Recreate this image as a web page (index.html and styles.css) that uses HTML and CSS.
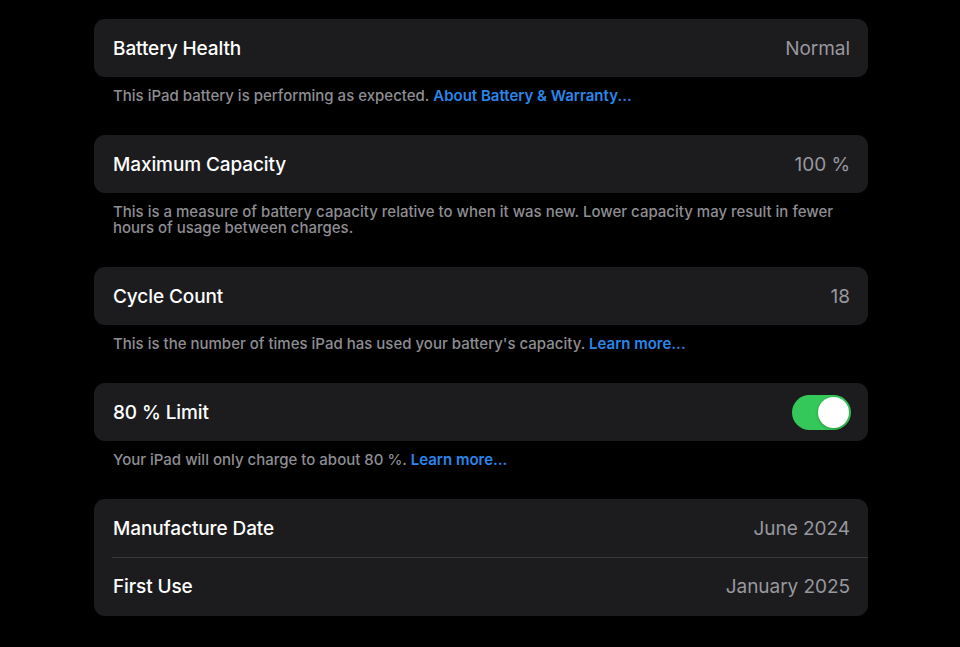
FILE: index.html
```html
<!DOCTYPE html>
<html lang="en">
<head>
<meta charset="utf-8">
<title>Battery Health</title>
<link rel="stylesheet" href="styles.css">
</head>
<body>
<main class="page">
  <section class="group">
    <div class="card">
      <div class="row"><span class="label">Battery Health</span><span class="value">Normal</span></div>
    </div>
    <p class="footer">This iPad battery is performing as expected. <a class="link">About Battery &amp; Warranty...</a></p>
  </section>
  <section class="group">
    <div class="card">
      <div class="row"><span class="label">Maximum Capacity</span><span class="value">100 %</span></div>
    </div>
    <p class="footer">This is a measure of battery capacity relative to when it was new. Lower capacity may result in fewer hours of usage between charges.</p>
  </section>
  <section class="group">
    <div class="card">
      <div class="row"><span class="label">Cycle Count</span><span class="value">18</span></div>
    </div>
    <p class="footer">This is the number of times iPad has used your battery's capacity. <a class="link">Learn more...</a></p>
  </section>
  <section class="group">
    <div class="card">
      <div class="row"><span class="label">80 % Limit</span><span class="toggle on"><span class="knob"></span></span></div>
    </div>
    <p class="footer">Your iPad will only charge to about 80 %. <a class="link">Learn more...</a></p>
  </section>
  <section class="group">
    <div class="card">
      <div class="row"><span class="label">Manufacture Date</span><span class="value">June 2024</span></div>
      <div class="row sep"><span class="label">First Use</span><span class="value">January 2025</span></div>
    </div>
  </section>
</main>
</body>
</html>
```
FILE: styles.css
```css
html, body {
  margin: 0;
  padding: 0;
  background: #000;
}
body {
  font-family: Inter, "Noto Sans", "Liberation Sans", sans-serif;
  color: #fff;
}
.page {
  width: 774px;
  margin-left: 94px;
  padding-top: 19px;
}
.group {
  margin-bottom: 31px;
}
.card {
  background: #1c1c1e;
  border-radius: 11px;
  overflow: hidden;
}
.row {
  height: 58px;
  display: flex;
  align-items: center;
  justify-content: space-between;
  padding: 0 18px 0 19px;
  position: relative;
}
.row.sep {
  height: 59px;
}
.row.sep::before {
  content: "";
  position: absolute;
  top: 0;
  left: 18px;
  right: 0;
  height: 1px;
  background: #38383a;
}
.label {
  font-size: 19px;
  font-weight: 500;
  letter-spacing: -0.1px;
}
.value {
  font-size: 19px;
  font-weight: 400;
  color: #98989e;
  letter-spacing: -0.05px;
}
.footer {
  margin: 0;
  padding: 11px 19px 0 19px;
  font-size: 15px;
  line-height: 16px;
  color: #8e8e93;
  font-weight: 500;
}
.link {
  color: #2a86ea;
  font-weight: 600;
}
.toggle {
  width: 59px;
  height: 35px;
  border-radius: 18px;
  background: #34c759;
  position: relative;
  margin-right: -1px;
}
.knob {
  position: absolute;
  top: 2px;
  right: 2px;
  width: 31px;
  height: 31px;
  border-radius: 50%;
  background: #fff;
  box-shadow: 0 1px 3px rgba(0,0,0,0.25);
}
```
